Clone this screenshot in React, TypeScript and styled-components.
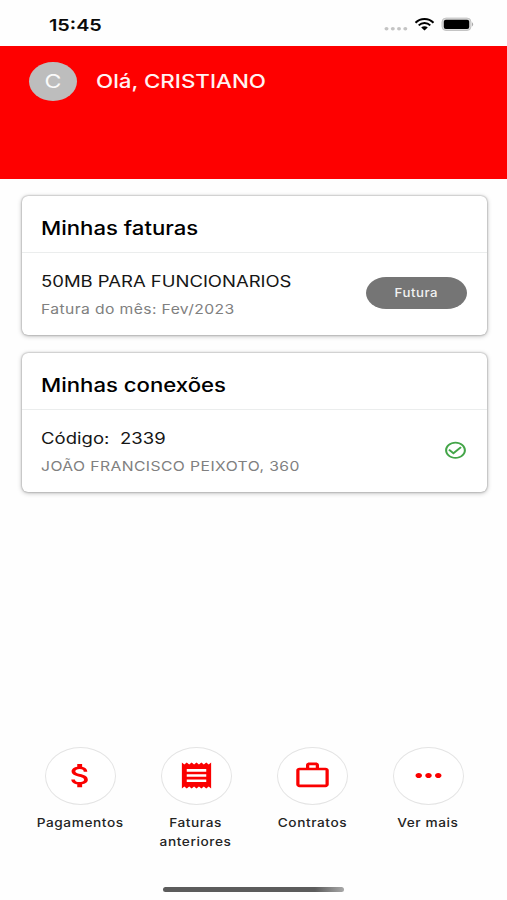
import React from "react";
import styled, { createGlobalStyle } from "styled-components";
import {
  MdAttachMoney,
  MdCheckCircleOutline,
  MdMoreHoriz,
  MdReceipt,
  MdWorkOutline,
} from "react-icons/md";

const GlobalStyle = createGlobalStyle`
  * { box-sizing: border-box; }
  body {
    margin: 0;
    background: #fefefe;
    font-family: Inter, "Liberation Sans", sans-serif;
  }
`;

const Screen = styled.div`
  width: 507px;
  height: 900px;
  display: flex;
  flex-direction: column;
  overflow: hidden;
  background: #fefefe;
`;

/* Wide-set type: glyphs are widened horizontally from the chosen origin. */
const Wide = styled.span<{
  $size: number;
  $line: number;
  $stretch?: number;
  $weight?: number;
  $spacing?: number;
  $color?: string;
  $center?: boolean;
}>`
  display: block;
  width: max-content;
  white-space: pre;
  text-align: ${(p) => (p.$center ? "center" : "left")};
  font-size: ${(p) => p.$size}px;
  line-height: ${(p) => p.$line}px;
  font-weight: ${(p) => p.$weight ?? 400};
  letter-spacing: ${(p) => p.$spacing ?? 0}px;
  color: ${(p) => p.$color ?? "#161616"};
  transform: scaleX(${(p) => p.$stretch ?? 1.22});
  transform-origin: ${(p) => (p.$center ? "center" : "left")};
`;

const StatusBar = styled.div`
  flex: none;
  height: 46px;
  padding: 3px 32px 0 48.5px;
  display: flex;
  align-items: center;
  justify-content: space-between;
`;

const StatusIcons = styled.div`
  display: flex;
  svg { display: block; }
`;

const Header = styled.header`
  flex: none;
  height: 133px;
  padding: 16px 29px 0;
  display: flex;
  align-items: flex-start;
  gap: 18.5px;
  background: #fe0000;
`;

const Avatar = styled.div`
  width: 48px;
  height: 39px;
  display: grid;
  place-items: center;
  border-radius: 50%;
  background: #bdbdbd;
`;

const Cards = styled.main`
  flex: 1;
  padding: 17px 20px 0 22px;
  display: flex;
  flex-direction: column;
  gap: 18px;
`;

const Card = styled.section`
  height: 139px;
  border-radius: 6px;
  background: #fff;
  box-shadow: 0 0 2px rgba(0, 0, 0, 0.4), 0 1px 5px rgba(0, 0, 0, 0.28);
`;

const CardTitle = styled.div`
  height: 57px;
  padding: 19px 19px 0;
  border-bottom: 1px solid #ebeded;
`;

const CardRow = styled.div`
  height: 82px;
  padding: 0 20px 0 19px;
  display: flex;
  align-items: center;
  justify-content: space-between;
`;

const Details = styled.div`
  padding-top: 3px;
  display: flex;
  flex-direction: column;
  gap: 3px;
`;

const Pill = styled.button`
  width: 101px;
  height: 32px;
  margin-bottom: 2px;
  padding: 1px 0 0;
  display: grid;
  place-items: center;
  border: 0;
  border-radius: 20px / 16px;
  background: #757575;
  font-family: inherit;
`;

const CheckSlot = styled.div`
  width: 25px;
  margin: 0 -1px 2px 0;
  svg { display: block; }
`;

const Actions = styled.nav`
  flex: none;
  height: 137px;
  padding: 0 22px 0 22.5px;
  display: grid;
  grid-template-columns: repeat(4, 116px);
`;

const Action = styled.div`
  display: flex;
  flex-direction: column;
  align-items: center;
  gap: 8px;
`;

const Ring = styled.div`
  width: 71px;
  height: 58px;
  display: grid;
  place-items: center;
  border: 1px solid #e4e4e4;
  border-radius: 50%;
  background: #fff;
`;

const ActionIcon = styled.div`
  display: flex;
  margin: 0 1px 1px 0;
  color: #fa0000;
  svg {
    width: 39px;
    height: 31px;
  }
`;

const ActionLabel = styled(Wide)`
  margin-right: 1px;
`;

const HomeArea = styled.footer`
  flex: none;
  height: 16px;
  padding-top: 3px;
`;

const HomeBar = styled.div`
  width: 181px;
  height: 5px;
  margin: 0 auto;
  border-radius: 3px;
  background: linear-gradient(90deg, #5c5c5c 84%, #a8a8a8);
`;

const actions = [
  { label: "Pagamentos", Icon: MdAttachMoney },
  { label: "Faturas\nanteriores", Icon: MdReceipt },
  { label: "Contratos", Icon: MdWorkOutline },
  { label: "Ver mais", Icon: MdMoreHoriz },
];

function StatusGlyphs() {
  return (
    <StatusIcons>
      <svg width="92" height="20" viewBox="0 0 92 20">
        <g fill="#c4c4c4">
          <ellipse cx="3.5" cy="13.8" rx="2" ry="1.7" />
          <ellipse cx="9.8" cy="13.8" rx="2" ry="1.7" />
          <ellipse cx="16" cy="13.8" rx="2" ry="1.7" />
          <ellipse cx="22.3" cy="13.8" rx="2" ry="1.7" />
        </g>
        <g fill="none" stroke="#000" strokeWidth="2">
          <path d="M32.5 7.7 C37.5 2.7 45.5 2.7 50.5 7.7" />
          <path d="M35.7 10.4 C39 7.2 44 7.2 47.3 10.4" />
        </g>
        <path d="M38.2 12.4 C40 10.8 43 10.8 44.8 12.4 L41.5 15.4 Z" fill="#000" />
        <rect x="59" y="3.1" width="29" height="12.4" rx="4" fill="#ddd" stroke="#c4c4c4" strokeWidth="1" />
        <rect x="60.8" y="4.8" width="25.4" height="9.2" rx="2" fill="#000" />
        <path d="M89 7.2 Q91.4 9.4 89 11.6 Z" fill="#aaa" />
      </svg>
    </StatusIcons>
  );
}

export default function App() {
  return (
    <>
      <GlobalStyle />
      <Screen>
        <StatusBar>
          <Wide $size={16.5} $line={22} $stretch={1.2} $weight={600} $color="#0a0a0a">15:45</Wide>
          <StatusGlyphs />
        </StatusBar>
        <Header>
          <Avatar>
            <Wide $size={19} $line={39} $color="#fafafa" $center>C</Wide>
          </Avatar>
          <Wide $size={18.8} $line={40} $stretch={1.19} $weight={500} $color="#fff2f2">Olá, CRISTIANO</Wide>
        </Header>
        <Cards>
          <Card>
            <CardTitle>
              <Wide $size={18.7} $line={27} $stretch={1.185} $weight={500} $color="#000">Minhas faturas</Wide>
            </CardTitle>
            <CardRow>
              <Details>
                <Wide $size={15.4} $line={24} $stretch={1.2}>50MB PARA FUNCIONARIOS</Wide>
                <Wide $size={13.3} $line={24} $stretch={1.18} $spacing={0.33} $color="#808080">Fatura do mês: Fev/2023</Wide>
              </Details>
              <Pill>
                <Wide $size={11.7} $line={31} $stretch={1.13} $weight={500} $spacing={0.5} $color="#f2f2f2" $center>Futura</Wide>
              </Pill>
            </CardRow>
          </Card>
          <Card>
            <CardTitle>
              <Wide $size={18.7} $line={27} $stretch={1.185} $weight={500} $color="#000">Minhas conexões</Wide>
            </CardTitle>
            <CardRow>
              <Details>
                <Wide $size={15.4} $line={24} $stretch={1.2} $spacing={0.05}>{"Código:  2339"}</Wide>
                <Wide $size={13.3} $line={24} $stretch={1.18} $spacing={0.36} $color="#808080">JOÃO FRANCISCO PEIXOTO, 360</Wide>
              </Details>
              <CheckSlot>
                <MdCheckCircleOutline
                  color="#43a548"
                  preserveAspectRatio="none"
                  style={{ width: 25, height: 20.5 }}
                />
              </CheckSlot>
            </CardRow>
          </Card>
        </Cards>
        <Actions>
          {actions.map(({ label, Icon }) => (
            <Action key={label}>
              <Ring>
                <ActionIcon>
                  <Icon preserveAspectRatio="none" />
                </ActionIcon>
              </Ring>
              <ActionLabel $size={12} $line={19} $stretch={1.14} $weight={500} $spacing={0.5} $color="#242424" $center>{label}</ActionLabel>
            </Action>
          ))}
        </Actions>
        <HomeArea>
          <HomeBar />
        </HomeArea>
      </Screen>
    </>
  );
}
